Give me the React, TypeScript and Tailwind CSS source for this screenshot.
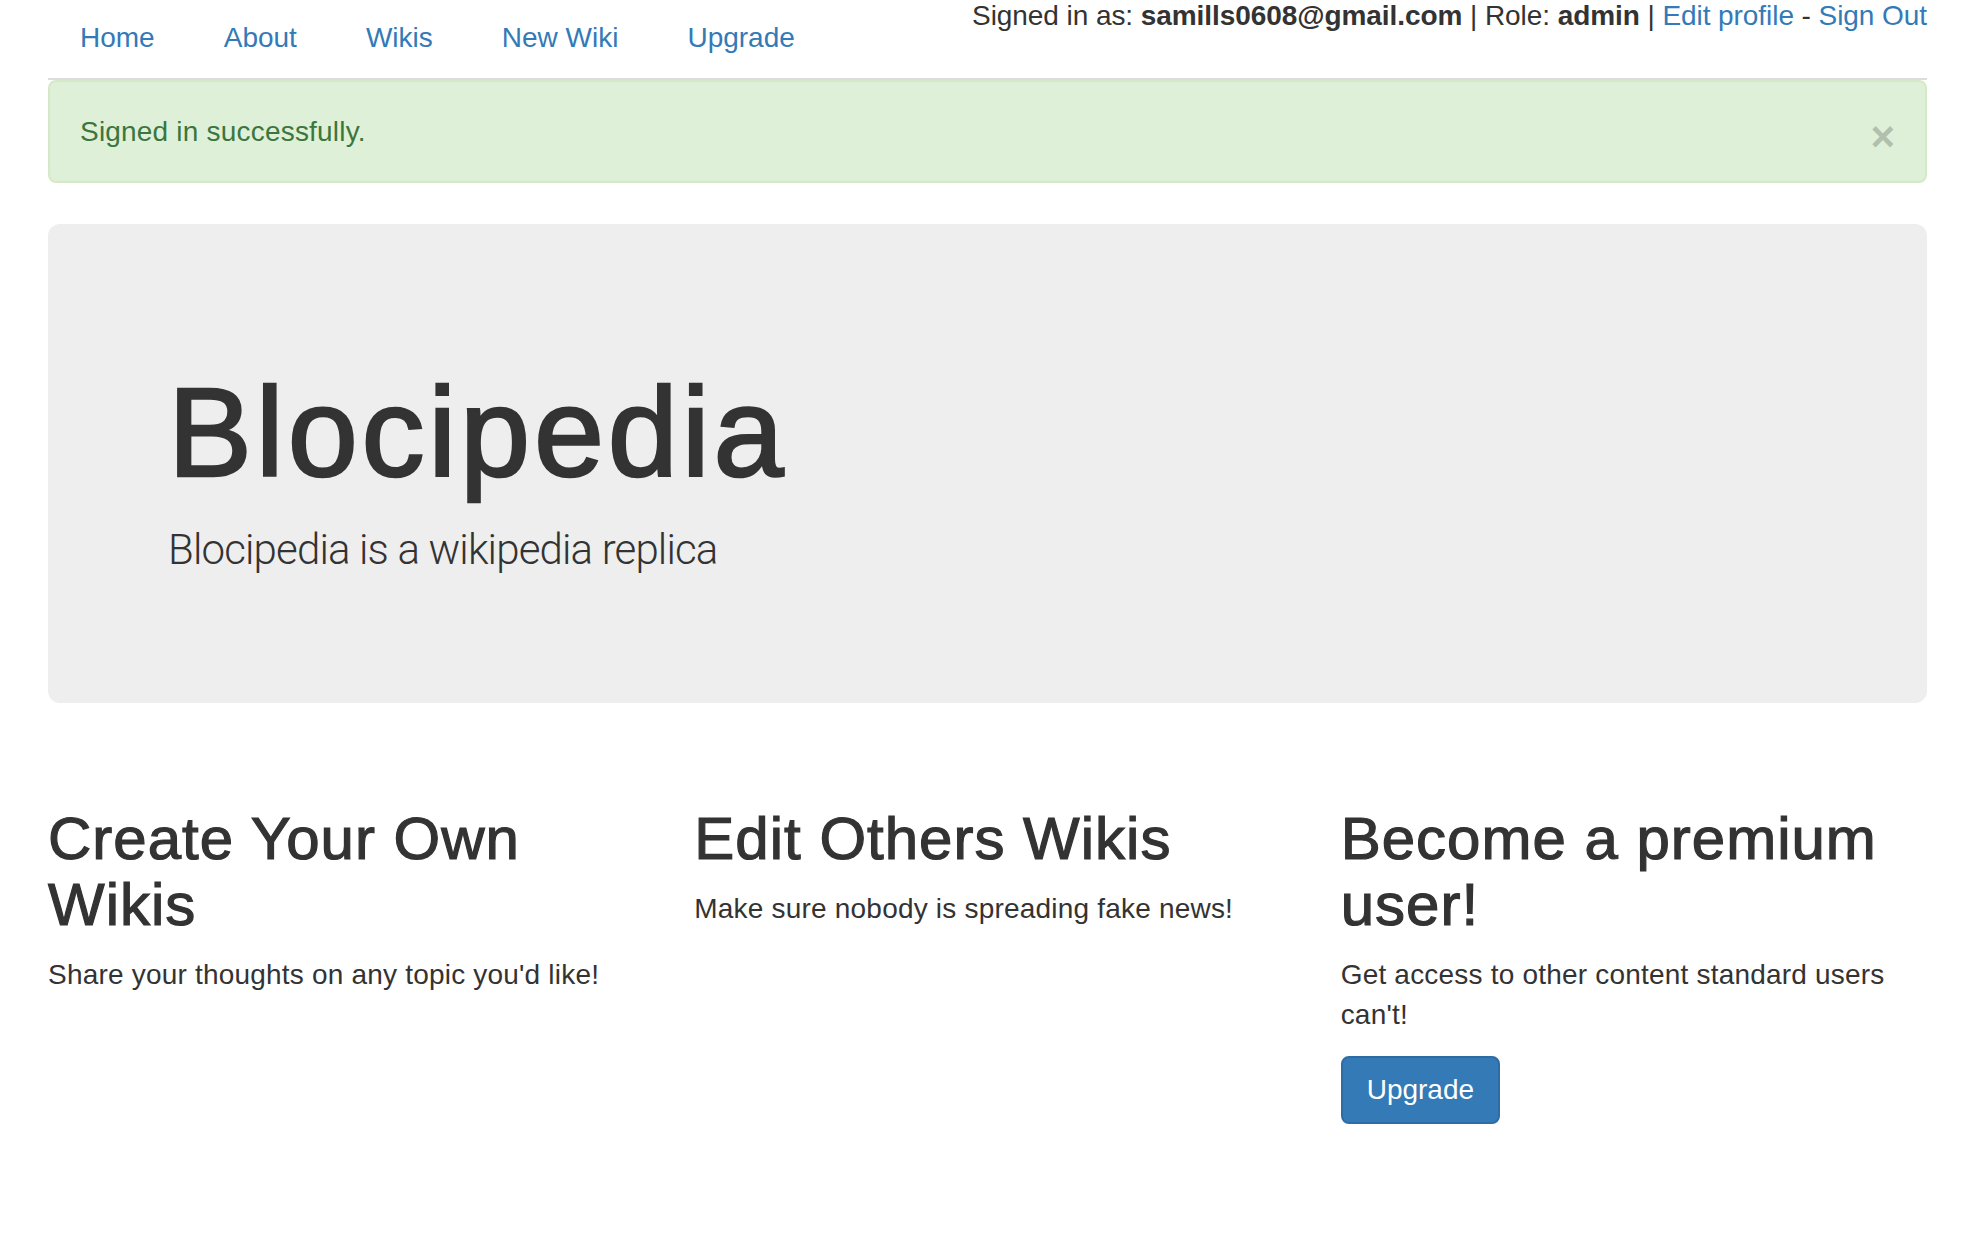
import React from "react";

const navLinks = ["Home", "About", "Wikis", "New Wiki", "Upgrade"];

export default function App() {
  return (
    <div className="min-h-screen bg-white pl-[48px] pr-[43px] text-[28px] leading-[40px] text-[#333] [font-family:'Liberation_Sans',Arial,sans-serif]">
      <header className="flex h-[80px] items-start justify-between border-b-2 border-[#ddd]">
        <ul className="ml-[2px] flex gap-[9px]">
          {navLinks.map((l) => (
            <li key={l}>
              <a href="#" className="block px-[30px] pt-[18px] leading-[40px] text-[#337ab7]">
                {l}
              </a>
            </li>
          ))}
        </ul>
        <div className="whitespace-nowrap leading-[32px] tracking-[-0.07px]">
          Signed in as: <b className="font-bold">samills0608@gmail.com</b> | Role:{" "}
          <b className="font-bold">admin</b> |{" "}
          <a href="#" className="text-[#337ab7]">
            Edit profile
          </a>{" "}
          -{" "}
          <a href="#" className="text-[#337ab7]">
            Sign Out
          </a>
        </div>
      </header>

      <div className="flex items-start justify-between rounded-[8px] border-2 border-[#d6e9c6] bg-[#dff0d8] px-[30px] pt-[30px] pb-[29px] text-[#3c763d]">
        <span className="tracking-[0.2px]">Signed in successfully.</span>
        <button className="h-[40px] text-[42px] font-bold leading-[50px] text-black opacity-20">×</button>
      </div>

      <div className="mt-[41px] rounded-[12px] bg-[#eeeeee] pl-[120px] pt-[140px] pb-[123px]">
        <h1 className="text-[126px] leading-[138px] tracking-[3.8px] [-webkit-text-stroke:2.5px_#333333]">Blocipedia</h1>
        <p className="mt-[18px] text-[42px] font-light leading-[60px] tracking-[-0.85px] [font-family:Roboto,sans-serif]">
          Blocipedia is a wikipedia replica
        </p>
      </div>

      <div className="mt-[60px] grid grid-cols-3 gap-x-[60px]">
        <div>
          <h2 className="mt-[43px] text-[60px] leading-[66px] tracking-[1px] [-webkit-text-stroke:1.2px_#333333]">Create Your Own Wikis</h2>
          <p className="mt-[17px] tracking-[0.2px]">Share your thoughts on any topic you'd like!</p>
        </div>
        <div>
          <h2 className="mt-[43px] text-[60px] leading-[66px] tracking-[1px] [-webkit-text-stroke:1.2px_#333333]">Edit Others Wikis</h2>
          <p className="mt-[17px] tracking-[0.2px]">Make sure nobody is spreading fake news!</p>
        </div>
        <div>
          <h2 className="mt-[43px] text-[60px] leading-[66px] tracking-[1px] [-webkit-text-stroke:1.2px_#333333]">Become a premium user!</h2>
          <p className="mt-[17px] tracking-[0.2px]">Get access to other content standard users can't!</p>
          <button className="mt-[21px] rounded-[8px] border-2 border-[#2e6da4] bg-[#337ab7] px-[24px] py-[12px] text-[28px] leading-[40px] text-white">
            Upgrade
          </button>
        </div>
      </div>
    </div>
  );
}
